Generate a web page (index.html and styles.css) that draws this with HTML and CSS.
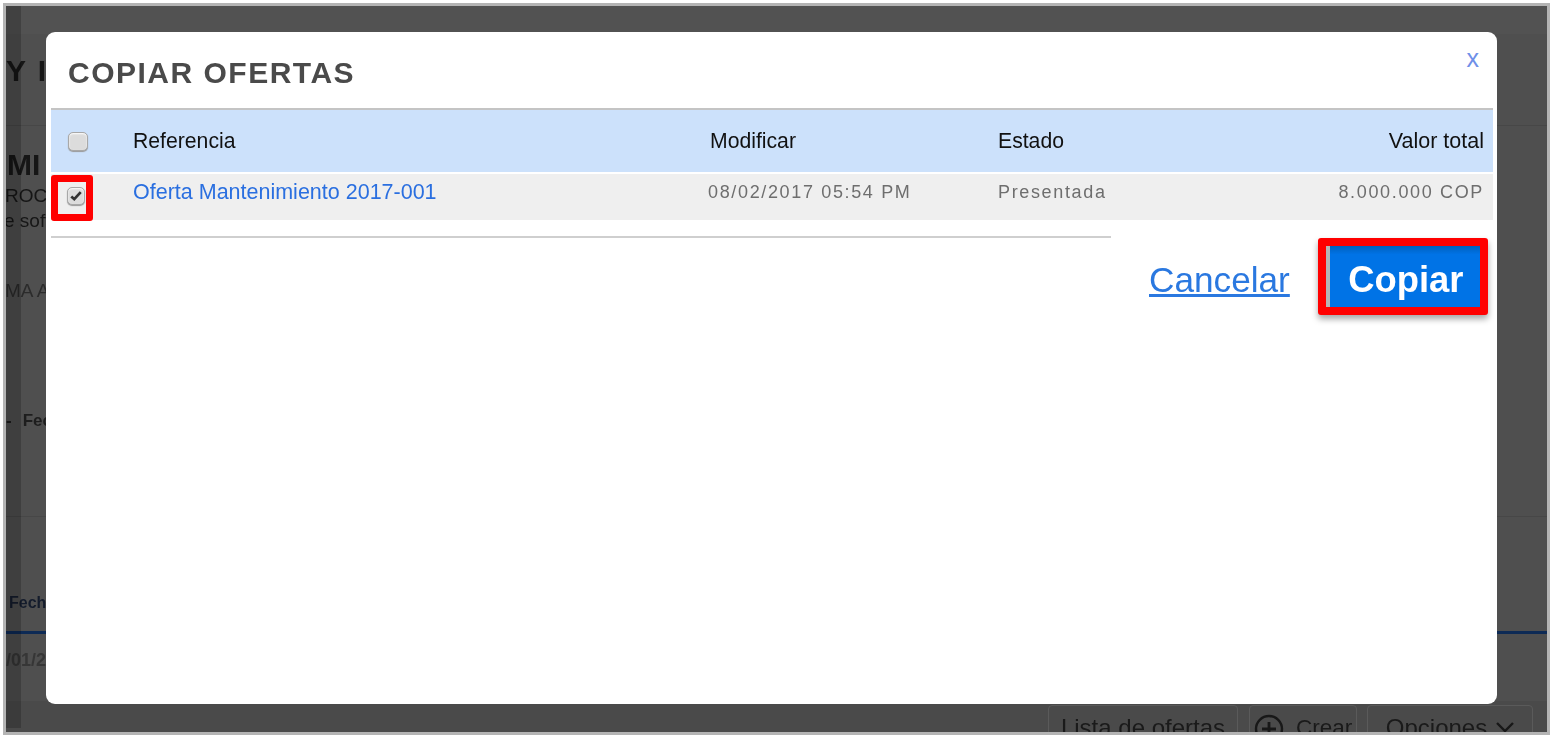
FILE: index.html
```html
<!DOCTYPE html>
<html lang="es">
<head>
<meta charset="utf-8">
<title>Copiar ofertas</title>
<link rel="stylesheet" href="styles.css">
</head>
<body>
<div class="shot">
  <div class="page">
    <div class="band"></div>
    <div class="sec-title"><h1 class="page-title">Y IMANTENIMIENTO</h1></div>
    <div class="sec-info">
      <h2 class="info-title">MI</h2>
      <p class="info-line">ROC</p>
      <p class="info-line info-soft">e software</p>
      <p class="info-gray">MA A</p>
      <p class="info-date"><span>-</span><span>Fecha</span></p>
    </div>
    <div class="sec-tabs">
      <div class="tab-label">Fecha</div>
      <div class="tab-date">/01/2017</div>
    </div>
    <div class="sec-actions">
      <span class="pill pill-list">Lista de ofertas</span>
      <span class="pill pill-new">
        <svg class="plus" viewBox="0 0 30 30"><circle cx="15" cy="15" r="13" fill="none" stroke="#181818" stroke-width="2.400"/><path d="M15 8v14M8 15h14" stroke="#181818" stroke-width="2.800" fill="none"/></svg>
        Crear
      </span>
      <span class="pill pill-opts">Opciones
        <svg class="chev" viewBox="0 0 18 12"><path d="M1 2l8 8 8-8" fill="none" stroke="#181818" stroke-width="2.400"/></svg>
      </span>
    </div>
  </div>
  <div class="rail"></div>

  <section class="modal">
    <header class="modal-head">
      <h2 class="modal-title">COPIAR OFERTAS</h2>
      <a class="modal-close">x</a>
    </header>
    <table class="offers">
      <colgroup>
        <col class="c-check"><col class="c-ref"><col class="c-mod"><col class="c-state"><col class="c-total">
      </colgroup>
      <thead>
        <tr>
          <th><span class="check"></span></th>
          <th>Referencia</th>
          <th class="th-mod">Modificar</th>
          <th>Estado</th>
          <th class="num">Valor total</th>
        </tr>
      </thead>
      <tbody>
        <tr>
          <td class="cell-check">
            <span class="mark mark-check">
              <span class="check check-on">
                <svg viewBox="0 0 14 12"><path d="M1.500 6.500l3.500 3.200L12.500 1.500" fill="none" stroke="#333" stroke-width="3.200"/></svg>
              </span>
            </span>
          </td>
          <td><a class="offer-link">Oferta Mantenimiento 2017-001</a></td>
          <td class="muted">08/02/2017 05:54 PM</td>
          <td class="muted">Presentada</td>
          <td class="muted num">8.000.000 COP</td>
        </tr>
      </tbody>
    </table>
    <footer class="modal-foot">
      <div class="foot-rule"></div>
      <a class="cancel">Cancelar</a>
      <div class="mark mark-btn"><button class="copy">Copiar</button></div>
    </footer>
  </section>
</div>
</body>
</html>
```
FILE: styles.css
```css
* { box-sizing: border-box; }
html, body { margin: 0; padding: 0; background: #fff; }
body { width: 1551px; height: 738px; overflow: hidden; font-family: "Liberation Sans", Arial, sans-serif; }

.shot {
  position: relative;
  width: 1547px;
  height: 732px;
  margin: 3px 0 0 3px;
  border: 3px solid #b4b4b4;
  overflow: hidden;
  background: #4f4f4f;
}

/* dimmed page behind the dialog */
.page { display: flex; flex-direction: column; height: 100%; filter: blur(.7px); color: #161616; }
.band { height: 28px; flex: none; background: #525252; }
.sec-title { height: 92px; flex: none; border-bottom: 1px solid #474747; padding: 19px 0 0; }
.page-title { margin: 0; font-size: 30px; line-height: 36px; font-weight: 700; white-space: nowrap; letter-spacing: 1px; word-spacing: 2px; }
.sec-info { height: 391px; flex: none; border-bottom: 1px solid #474747; padding: 21px 0 0 1px; }
.info-title { margin: 0; font-size: 30px; line-height: 36px; font-weight: 700; }
.info-line { margin: 1px 0 0 -2px; font-size: 19px; line-height: 24px; white-space: nowrap; }
.info-soft { margin: 1px 0 0 -3px; }
.info-gray { margin: 46px 0 0 -2px; font-size: 19px; line-height: 24px; color: #2b2b2b; }
.info-date { margin: 107px 0 0 -1px; display: flex; gap: 11px; font-size: 17px; line-height: 22px; font-weight: 700; color: #1d1d1d; }
.sec-tabs { height: 184px; flex: none; padding: 76px 0 0; }
.tab-label { font-size: 16px; line-height: 20px; height: 41px; border-bottom: 3px solid #0d2a55; padding: 0 0 0 3px; color: #141c2c; font-weight: 700; }
.tab-date { font-size: 18px; line-height: 20px; margin: 16px 0 0; color: #363636; font-weight: 700; }
.sec-actions { flex: 1; display: flex; justify-content: flex-end; align-items: flex-start; padding: 4px 14px 0 0; background: #4a4a4a; }
.pill { display: flex; align-items: flex-start; height: 40px; border: 1px solid #5a5a5a; border-radius: 4px 4px 0 0; padding: 8px 0 0; font-size: 24px; line-height: 28px; white-space: nowrap; color: #1a1a1a; justify-content: center; }
.pill-list { width: 190px; margin-right: 11px; }
.pill-new { width: 108px; margin-right: 10px; gap: 12px; justify-content: flex-start; padding: 8px 0 0 4px; font-size: 22.500px; }
.pill-opts { width: 166px; gap: 9px; }
.plus { width: 30px; height: 30px; flex: none; }
.chev { width: 18px; height: 12px; flex: none; margin-top: 7px; }

.rail { position: absolute; left: 0; top: 0; width: 15px; height: 722px; background: rgba(0,0,0,.2); }

/* dialog */
.modal {
  position: absolute;
  left: 40px;
  top: 26px;
  width: 1451px;
  height: 672px;
  background: #fff;
  border-radius: 9px;
  padding: 0 4px 0 5px;
}
.modal-head { position: relative; height: 76px; padding: 23px 0 0 17px; }
.modal-title { margin: 0; font-size: 30px; line-height: 36px; font-weight: 700; color: #4a4a4a; letter-spacing: 1.500px; filter: blur(.4px); }
.modal-close { position: absolute; right: 14px; top: 11px; font-size: 25px; line-height: 30px; color: #6f8fe8; }

.offers { width: 1442px; border-collapse: collapse; table-layout: fixed; border-top: 2px solid #c4c4c4; filter: blur(.35px); }
.c-check { width: 82px; }
.c-ref { width: 575px; }
.c-mod { width: 290px; }
.c-state { width: 200px; }
.offers th { height: 64px; background: #cce1fb; padding: 0; text-align: left; font-size: 21.200px; font-weight: 400; color: #111; }
.offers td { height: 47px; background: #efefef; padding: 0 0 10px; border-top: 2px solid #fff; font-size: 18px; letter-spacing: 1.650px; color: #6e6e6e; background-clip: padding-box; }
.offers th.num, .offers td.num { text-align: right; padding-right: 9px; }
.offers th.num { font-size: 21.500px; }
.offers th:first-child { padding-left: 17px; }
.offers th.th-mod { padding-left: 2px; }
.offers td.cell-check { padding: 0; vertical-align: top; }
.offer-link { display: inline-block; margin-top: 1px; font-size: 21.500px; letter-spacing: 0; color: #2a6fe0; }

.check { display: block; width: 20px; height: 19px; border-radius: 5px; background: #dcdcdc; border: 1px solid #a8a8a8; box-shadow: inset 0 1px 2px #fff, 0 1px 1px #999; }
.check-on { width: 18px; height: 18px; padding: 2px; }
.check-on svg { display: block; width: 100%; height: 100%; }

.mark { display: block; border: 7px solid #f00; border-radius: 3px; }
.mark-check { width: 42px; height: 46px; padding: 5px 0 0 9px; margin: 1px 0 -2px; }

.modal-foot { display: flex; align-items: flex-start; padding-top: 16px; }
.foot-rule { width: 1060px; height: 2px; background: #cfcfcf; flex: none; }
.cancel { margin: 19px 0 0 38px; font-size: 35.200px; line-height: 50px; color: #2a78e0; text-decoration: underline; white-space: nowrap; filter: blur(.4px); }
.mark-btn { margin: 2px 0 0 28px; width: 170px; height: 77px; border-width: 8px; background: #b6b6b6; box-shadow: 0 4px 6px rgba(0,0,0,.35); }
.copy { display: block; width: 150px; height: 61px; margin-left: 4px; border: 0; padding: 6px 0 0 2px; background: linear-gradient(#0060be, #0073e6 14%); color: #fff; font: 700 36.400px "Liberation Sans", Arial, sans-serif; filter: blur(.3px); }
```
